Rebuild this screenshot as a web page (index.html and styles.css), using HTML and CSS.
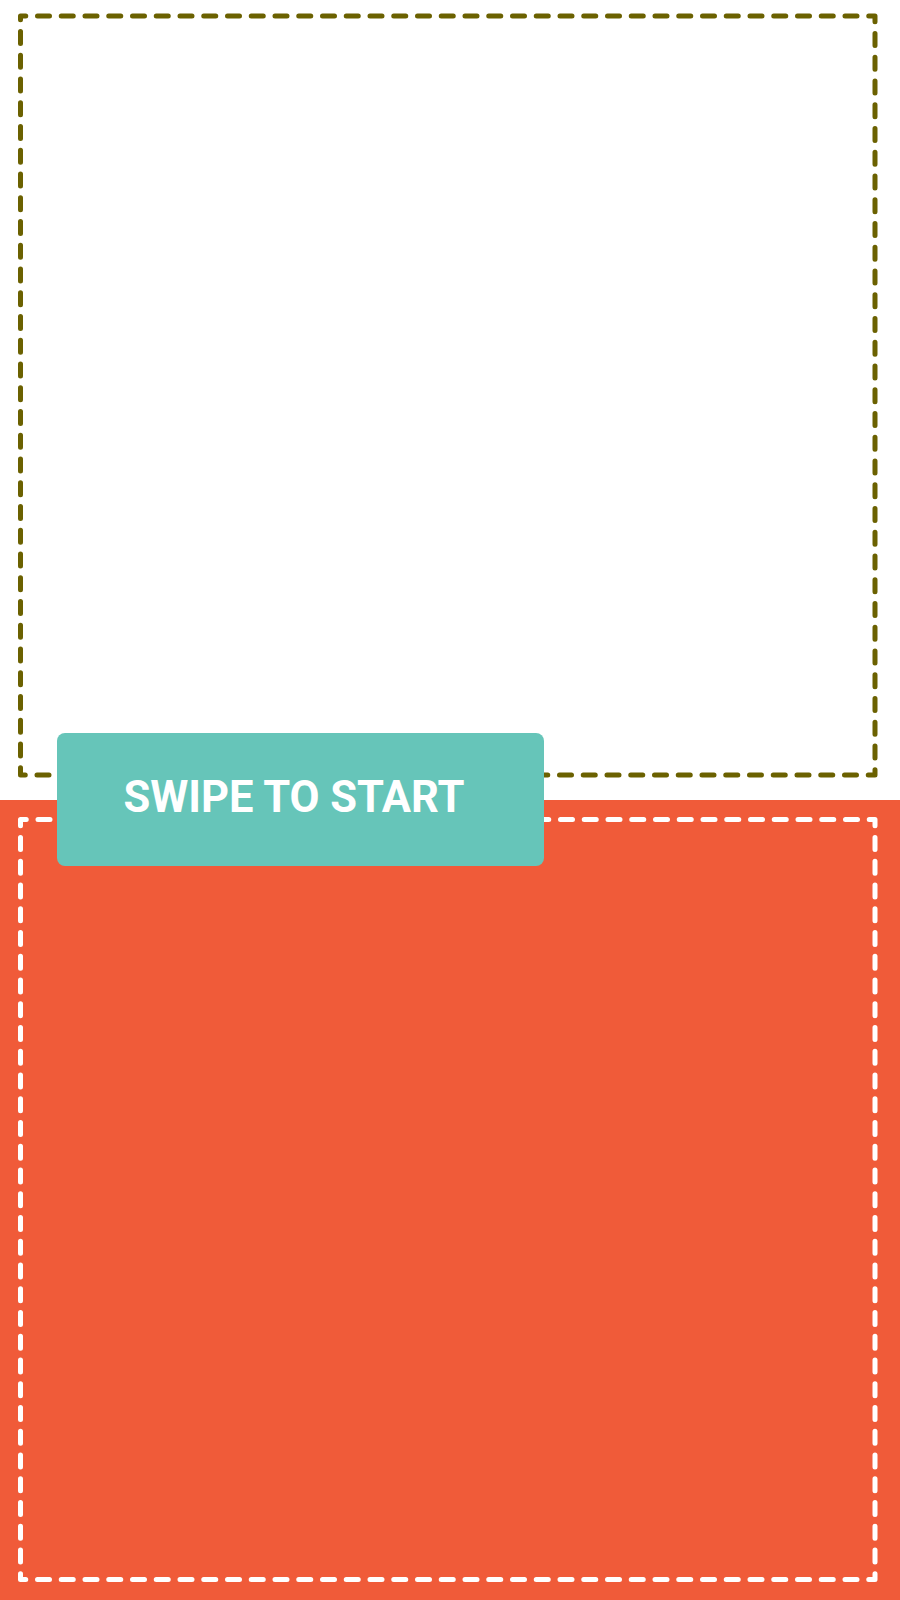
FILE: index.html
```html
<!DOCTYPE html>
<html>
<head>
<meta charset="utf-8">
<link rel="stylesheet" href="styles.css">
</head>
<body>
<div class="page">
  <section class="zone zone-top">
    <svg class="frame" width="900" height="800" viewBox="0 0 900 800">
      <path class="dash dash-olive" d="M20.5 16 H875 V775 H20.5 Z"/>
    </svg>
  </section>
  <section class="zone zone-bottom">
    <svg class="frame" width="900" height="800" viewBox="0 0 900 800">
      <path class="dash dash-white" d="M20.5 779.5 H875 V19.5 H20.5 Z"/>
    </svg>
  </section>
  <div class="swipe-btn"><span class="swipe-label">SWIPE TO START</span></div>
</div>
</body>
</html>
```
FILE: styles.css
```css
html, body {
  margin: 0;
  padding: 0;
  background: #ffffff;
}
.page {
  position: relative;
  width: 900px;
  height: 1600px;
  display: flex;
  flex-direction: column;
  overflow: hidden;
}
.zone {
  height: 800px;
  flex: 0 0 800px;
}
.zone-top {
  background: #ffffff;
}
.zone-bottom {
  background: #f05b39;
}
.frame {
  display: block;
}
.dash {
  fill: none;
  stroke-width: 5;
  stroke-linecap: round;
  stroke-linejoin: round;
  stroke-dasharray: 12 11.75;
  stroke-dashoffset: 6.75;
}
.dash-olive {
  stroke: #6b6100;
}
.dash-white {
  stroke: #ffffff;
}
.swipe-btn {
  position: absolute;
  left: 57px;
  top: 733px;
  width: 487px;
  height: 133px;
  border-radius: 8px;
  background: #66c5b9;
  display: flex;
  align-items: center;
  justify-content: center;
  box-sizing: border-box;
  padding-right: 13px;
  padding-bottom: 3px;
}
.swipe-label {
  font-family: Roboto, "Liberation Sans", sans-serif;
  font-weight: 700;
  font-size: 43.5px;
  color: #ffffff;
  line-height: 1;
}
```
